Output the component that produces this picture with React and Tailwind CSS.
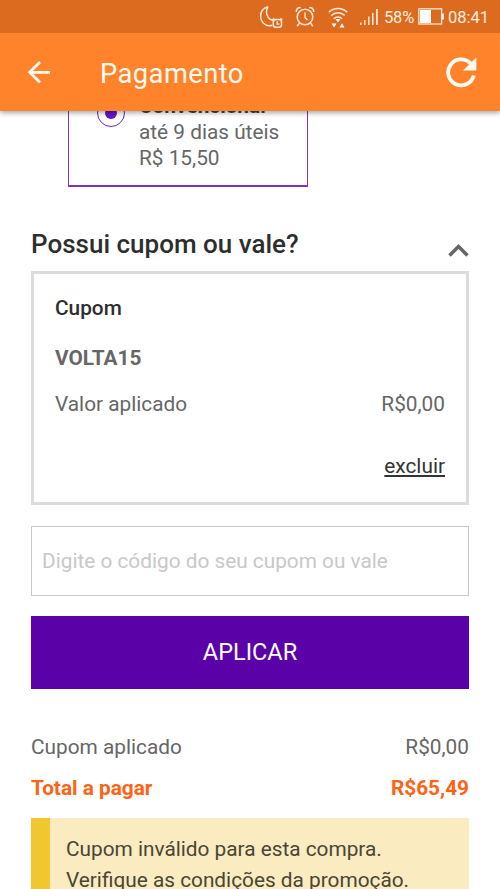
import { useState } from "react";

function MoonIcon() {
  return (
    <svg width="24" height="24" viewBox="0 0 24 24" fill="none" stroke="#ffe9d2" strokeWidth="1.5">
      <path d="M9 1.700C4.500 3 1.600 6.500 1.600 11.200c0 5.300 4 9.500 9 9.500 1 0 1.800-.2 2.700-.5M9 1.700c-1.700 3-2 7.300.2 10.600 1.300 2 3 2.700 4.800 2.900" />
      <rect x="14.300" y="14.500" width="8.200" height="7.800" rx="2.500" />
      <path d="M18.200 16.200v3h2.300M13.300 15l2-1.700M23.500 15l-2-1.700" strokeWidth="1.300" />
    </svg>
  );
}

function AlarmIcon() {
  return (
    <svg width="20" height="22" viewBox="0 0 20 22" fill="none" stroke="#ffe9d2" strokeWidth="1.5">
      <circle cx="10" cy="11" r="7.800" />
      <path d="M10 6.500v5l2.500 2.500M1.300 6C1 3.200 3 1.200 5.800 1.700M18.700 6c.3-2.800-1.700-4.800-4.500-4.300M4.500 17l-2.300 3.300M15.500 17l2.300 3.300" />
    </svg>
  );
}

function WifiIcon() {
  return (
    <svg width="20" height="22" viewBox="0 0 20 22" fill="none" stroke="#ffe9d2" strokeWidth="1.600">
      <path d="M.8 6.300a13 13 0 0 1 18.400 0M3.300 9.500a9.500 9.500 0 0 1 13.400 0M5.800 12.700a6 6 0 0 1 8.400 0" />
      <path d="M7.500 13h5L10 16.500zM3.500 17.500h5L6 21.500zM14 17.300l2.500 4.200h-5z" fill="#fff" stroke="none" />
    </svg>
  );
}

function SignalIcon() {
  return (
    <svg width="20" height="18" viewBox="0 0 20 18" fill="#ffe9d2">
      <path d="M1 14.500h1.500V17H1zM5 12h1.500v5H5zM9 8.500h1.500V17H9zM13 5h1.500v12H13zM17 1h1.800v16H17z" />
    </svg>
  );
}

function BatteryIcon() {
  return (
    <svg width="26" height="17" viewBox="0 0 26 17" fill="none">
      <rect x=".8" y=".8" width="22.800" height="15.200" stroke="#ffe9d2" strokeWidth="1.300" />
      <path d="M2 2h11v13H2zM24 5.500h1.800v6H24z" fill="#fff" />
    </svg>
  );
}

function StatusBar() {
  return (
    <div className="flex h-[33px] items-center bg-[#dc6b20] pl-[259px] text-[16.500px] text-[#ffeedd]">
      <MoonIcon />
      <div className="ml-3"><AlarmIcon /></div>
      <div className="ml-[13px] pt-px"><WifiIcon /></div>
      <div className="ml-[11px] pt-px"><SignalIcon /></div>
      <span className="ml-[5px] w-[30px] pt-[3px] whitespace-nowrap tracking-[-0.200px]">58%</span>
      <div className="ml-[4px]"><BatteryIcon /></div>
      <span className="ml-[4px] pt-[3px]">08:41</span>
    </div>
  );
}

function Header() {
  return (
    <header className="relative z-10 shadow-[0_2px_5px_rgba(0,0,0,0.35)]">
      <StatusBar />
      <div className="flex h-[78px] items-center bg-[#ff832b] pl-[27px] pr-[23px] text-[#fffaf0]">
        <button>
          <svg width="24" height="24" viewBox="0 0 24 24" fill="none" stroke="currentColor" strokeWidth="2.800">
            <path d="M23 12.300H3M13 2L2.700 12.300 13 22.600" />
          </svg>
        </button>
        <h1 className="ml-[49px] flex-1 pt-[5px] text-[27.300px] tracking-[0.450px]">Pagamento</h1>
        <button>
          <svg width="32" height="32" viewBox="0 0 32 32" fill="none">
            <path d="M28.800 19.500A13 13 0 1 1 25.500 7.300" stroke="currentColor" strokeWidth="3.800" />
            <path d="M31.300 1.500v13H18z" fill="currentColor" />
          </svg>
        </button>
      </div>
    </header>
  );
}

function Coupon() {
  return (
    <div className="h-[234px] border-[3px] border-[#dcdcdc] px-[21px] pt-[19px] text-[20.800px] leading-[30px] text-[#666]">
      <p className="font-medium text-[#2e2e2e]">Cupom</p>
      <p className="mt-5 font-bold">VOLTA15</p>
      <div className="mt-4 flex justify-between">
        <span>Valor aplicado</span>
        <span>R$0,00</span>
      </div>
      <div className="mt-8 text-right text-[#333]">
        <a className="underline">excluir</a>
      </div>
    </div>
  );
}

function App() {
  const [code, setCode] = useState("");

  return (
    <div className="h-[889px] w-[500px] overflow-hidden bg-white font-['Roboto',sans-serif]">
      <Header />

      <main className="px-[31px]">
        {/* Shipping option */}
        <div className="-mt-6 ml-[37px] flex h-[100px] w-[240px] border-[1.500px] border-b-2 border-[#7a35c8] pl-[28px] pt-[5px]">
          <div className="mt-[6px] flex size-7 items-center justify-center rounded-full border-[1.500px] border-[#6f24c4]">
            <div className="size-3 rounded-full bg-[#6516c8]" />
          </div>
          <div className="ml-[14px] text-[20.800px] leading-[26px] text-[#666]">
            <p className="font-bold text-[#444]">Convencional</p>
            <p>até 9 dias úteis</p>
            <p>R$ 15,50</p>
          </div>
        </div>

        <div className="mt-[41px] flex h-[43px] justify-between">
          <h2 className="text-[26px] font-medium leading-[32px] text-[#2e2e2e]">Possui cupom ou vale?</h2>
          <svg className="mt-[15px]" width="21" height="14" viewBox="0 0 21 14" fill="none" stroke="#666" strokeWidth="3.500">
            <path d="M1.500 12.500l9-9 9 9" />
          </svg>
        </div>

        <Coupon />

        <input
          className="mt-[21px] block h-[70px] w-full border border-[#c8c8c8] px-[10px] text-[20.800px] placeholder:text-[#c8c8c8]"
          placeholder="Digite o código do seu cupom ou vale"
          value={code}
          onChange={(e) => setCode(e.target.value)}
        />
        <button className="mt-5 h-[73px] w-full bg-[#5a02a8] text-[23.500px] text-white">APLICAR</button>

        {/* Totals */}
        <div className="mt-[43px] flex justify-between text-[20.800px] leading-[30px] text-[#666]">
          <span>Cupom aplicado</span>
          <span>R$0,00</span>
        </div>
        <div className="mt-[11px] flex justify-between text-[20.800px] font-bold leading-[30px] text-[#fb6315]">
          <span>Total a pagar</span>
          <span>R$65,49</span>
        </div>

        <div className="mt-[15px] h-[90px] border-l-[19px] border-[#f0c72f] bg-[#faecc0] pl-4 pt-4 text-[20.800px] leading-[31px] text-[#4a4535]">
          <p>Cupom inválido para esta compra.</p>
          <p>Verifique as condições da promoção.</p>
        </div>
      </main>
    </div>
  );
}

export default App;
